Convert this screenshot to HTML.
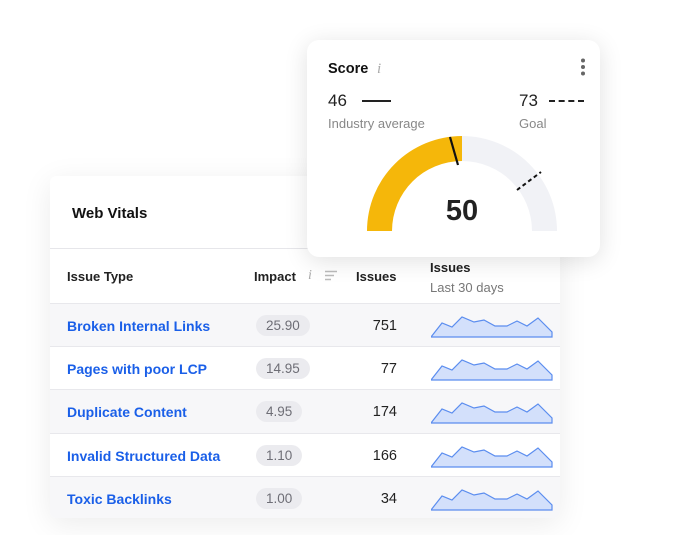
<!DOCTYPE html>
<html><head><style>
body{margin:0;width:686px;height:535px;background:#fff;font-family:"Liberation Sans",sans-serif;position:relative;overflow:hidden}
.card{position:absolute;left:50px;top:176px;width:510px;height:342px;background:#fff;border-radius:6px;box-shadow:0 6px 30px rgba(0,0,0,.08);overflow:hidden}
.t{position:absolute;white-space:nowrap}
.row{position:absolute;left:0;width:510px;height:43px;border-top:1px solid #e8e8ec}
.g{background:#f7f7f9}
.lnk{position:absolute;left:17px;top:14px;color:#1a5fe8;font-weight:bold;font-size:14px}
.pill{position:absolute;left:206px;top:11px;height:21px;line-height:21px;padding:0 10px;border-radius:11px;background:#ebebef;color:#6e6e76;font-size:13.5px}
.num{position:absolute;right:163px;top:14px;font-size:14.5px;color:#222}
.sp{position:absolute;left:381px;top:12px}
.score{position:absolute;left:307px;top:40px;width:293px;height:217px;background:#fff;border-radius:12px;box-shadow:0 4px 24px rgba(0,0,0,.12)}
</style></head><body>
<div class="card">
 <div class="t" style="left:22px;top:29px;font-size:15px;font-weight:bold;color:#111">Web Vitals</div>
 <div style="position:absolute;left:0;top:72px;width:510px;border-top:1px solid #e6e6ea"></div>
 <div class="t" style="left:17px;top:93px;font-size:13px;font-weight:bold;color:#222">Issue Type</div>
 <div class="t" style="left:204px;top:93px;font-size:13px;font-weight:bold;color:#222">Impact</div>
 <div class="t" style="left:258px;top:92px;font-size:14px;color:#aaa;font-family:'Liberation Serif',serif;font-style:italic">i</div>
 <svg class="t" style="left:275px;top:94px" width="13" height="11"><path d="M0 1.5H12M0 5.5H9M0 9.5H6" stroke="#bbb" stroke-width="1.4"/></svg>
 <div class="t" style="left:306px;top:93px;font-size:13px;font-weight:bold;color:#222">Issues</div>
 <div class="t" style="left:380px;top:84px;font-size:13px;font-weight:bold;color:#222">Issues</div>
 <div class="t" style="left:380px;top:104px;font-size:13px;color:#777">Last 30 days</div>
 <div class="row g" style="top:127px"><span class="lnk">Broken Internal Links</span><span class="pill">25.90</span><span class="num">751</span><svg class="sp" width="124" height="22"><path d="M0 21L11 7L21 11L31 1L43 6L53 4L64 10L76 10L86 5L96 10L107 2L121 16V21Z" fill="#d3e0fb" stroke="#5b8def" stroke-width="1.2"/></svg></div>
 <div class="row" style="top:170px"><span class="lnk">Pages with poor LCP</span><span class="pill">14.95</span><span class="num">77</span><svg class="sp" width="124" height="22"><path d="M0 21L11 7L21 11L31 1L43 6L53 4L64 10L76 10L86 5L96 10L107 2L121 16V21Z" fill="#d3e0fb" stroke="#5b8def" stroke-width="1.2"/></svg></div>
 <div class="row g" style="top:213px"><span class="lnk">Duplicate Content</span><span class="pill">4.95</span><span class="num">174</span><svg class="sp" width="124" height="22"><path d="M0 21L11 7L21 11L31 1L43 6L53 4L64 10L76 10L86 5L96 10L107 2L121 16V21Z" fill="#d3e0fb" stroke="#5b8def" stroke-width="1.2"/></svg></div>
 <div class="row" style="top:257px"><span class="lnk">Invalid Structured Data</span><span class="pill">1.10</span><span class="num">166</span><svg class="sp" width="124" height="22"><path d="M0 21L11 7L21 11L31 1L43 6L53 4L64 10L76 10L86 5L96 10L107 2L121 16V21Z" fill="#d3e0fb" stroke="#5b8def" stroke-width="1.2"/></svg></div>
 <div class="row g" style="top:300px"><span class="lnk">Toxic Backlinks</span><span class="pill">1.00</span><span class="num">34</span><svg class="sp" width="124" height="22"><path d="M0 21L11 7L21 11L31 1L43 6L53 4L64 10L76 10L86 5L96 10L107 2L121 16V21Z" fill="#d3e0fb" stroke="#5b8def" stroke-width="1.2"/></svg></div>
</div>
<div class="score">
 <div class="t" style="left:21px;top:21px;font-size:14.5px;font-weight:bold;color:#111">Score</div>
 <div class="t" style="left:70px;top:21px;font-size:15px;color:#aaa;font-family:'Liberation Serif',serif;font-style:italic">i</div>
 <svg class="t" style="left:273px;top:18px" width="6" height="18"><circle cx="3" cy="2.5" r="2" fill="#666"/><circle cx="3" cy="9" r="2" fill="#666"/><circle cx="3" cy="15.5" r="2" fill="#666"/></svg>
 <div class="t" style="left:21px;top:51px;font-size:17px;color:#222">46</div>
 <div style="position:absolute;left:55px;top:60px;width:29px;border-top:2px solid #222"></div>
 <div class="t" style="left:21px;top:76px;font-size:13px;color:#888">Industry average</div>
 <div class="t" style="left:212px;top:51px;font-size:17px;color:#222">73</div>
 <div style="position:absolute;left:242px;top:60px;width:35px;border-top:2px dashed #222"></div>
 <div class="t" style="left:212px;top:76px;font-size:13px;color:#888">Goal</div>
 <svg class="t" style="left:0;top:0" width="293" height="217">
  <path d="M60 191A95 95 0 0 1 155 96V121A70 70 0 0 0 85 191Z" fill="#f5b70a"/>
  <path d="M155 96A95 95 0 0 1 250 191H225A70 70 0 0 0 155 121Z" fill="#f1f2f6"/>
  <path d="M143 97L151 125" stroke="#111" stroke-width="2.2"/>
  <path d="M210 150L234 132" stroke="#111" stroke-width="2" stroke-dasharray="4 3"/>
  <text x="155" y="180" text-anchor="middle" font-family="Liberation Sans" font-weight="bold" font-size="29" fill="#222">50</text>
 </svg>
</div>
</body></html>
